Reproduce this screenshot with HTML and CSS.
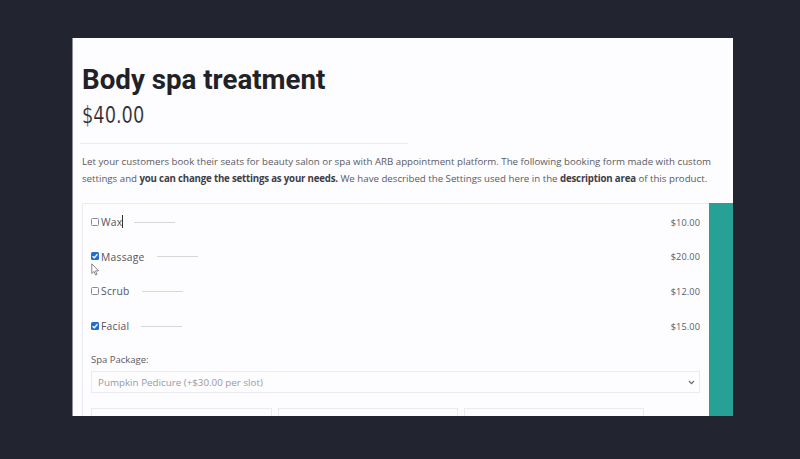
FILE: index.html
```html
<!DOCTYPE html>
<html>
<head>
<meta charset="utf-8">
<link rel="stylesheet" href="styles.css">
</head>
<body>
<div class="panel">
  <h1 class="title">Body spa treatment</h1>
  <div class="price"><span>$40.00</span></div>
  <hr class="divider">
  <p class="desc">Let your customers book their seats for beauty salon or spa with ARB appointment platform. The following booking form made with custom settings and <b>you can change the settings as your needs.</b> We have described the Settings used here in the <b>description area</b> of this product.</p>
  <div class="form">
    <div class="row">
      <label class="opt"><span class="cb"></span><span class="lbl">Wax<span class="caret"></span></span><span class="rule"></span></label>
      <span class="amt">$10.00</span>
    </div>
    <div class="row">
      <label class="opt"><span class="cb on"><svg viewBox="0 0 8 8" width="8" height="8"><path d="M1.6 4.2 L3.3 5.8 L6.4 2.3" fill="none" stroke="#fff" stroke-width="1.3"/></svg></span><span class="lbl">Massage</span><span class="rule"></span></label>
      <span class="amt">$20.00</span>
    </div>
    <div class="row">
      <label class="opt"><span class="cb"></span><span class="lbl">Scrub</span><span class="rule"></span></label>
      <span class="amt">$12.00</span>
    </div>
    <div class="row">
      <label class="opt"><span class="cb on"><svg viewBox="0 0 8 8" width="8" height="8"><path d="M1.6 4.2 L3.3 5.8 L6.4 2.3" fill="none" stroke="#fff" stroke-width="1.3"/></svg></span><span class="lbl">Facial</span><span class="rule"></span></label>
      <span class="amt">$15.00</span>
    </div>
    <div class="field-label">Spa Package:</div>
    <div class="select"><span>Pumpkin Pedicure (+$30.00 per slot)</span><svg width="7" height="5" viewBox="0 0 7 5"><path d="M1 1 L3.5 3.6 L6 1" fill="none" stroke="#666" stroke-width="1.1"/></svg></div>
    <div class="inputs">
      <div class="inp"></div>
      <div class="inp"></div>
      <div class="inp"></div>
    </div>
    <svg class="pointer" width="9" height="13" viewBox="0 0 9 13"><path d="M0.8 0.8 L0.8 10.5 L3 8.4 L4.6 12 L6 11.4 L4.5 7.9 L7.6 7.8 Z" fill="#fff" stroke="#777" stroke-width="0.9" stroke-linejoin="round"/></svg>
  </div>
  <div class="side"></div>
</div>
</body>
</html>
```
FILE: styles.css
```css
html, body {
  margin: 0;
  padding: 0;
  background: #22252f;
}
body {
  height: 459px;
  overflow: hidden;
  padding-top: 38px;
  box-sizing: border-box;
}
.panel {
  position: relative;
  margin-left: 72px;
  width: 661px;
  height: 378px;
  background: #fdfcfe;
  border-left: 1px solid #8d8d98;
  box-sizing: border-box;
  overflow: hidden;
  padding: 25px 0 0 9px;
}
.title {
  margin: 0;
  font-family: Roboto, "Liberation Sans", sans-serif;
  font-weight: 700;
  font-size: 27.7px;
  line-height: 34px;
  color: #222226;
}
.price {
  height: 30px;
  margin-top: 3px;
}
.price span {
  display: inline-block;
  font-family: "DejaVu Sans Condensed", "DejaVu Sans", sans-serif;
  font-weight: 400;
  font-size: 23px;
  line-height: 30px;
  color: #26262b;
  transform: scaleX(0.86);
  transform-origin: left center;
  -webkit-text-stroke: 0.2px #fdfcfe;
}
.divider {
  margin: 13px 0 0 -2px;
  width: 328px;
  border: 0;
  border-top: 1px solid #ecebf0;
  height: 0;
}
.desc {
  margin: 9px 0 0 0;
  width: 640px;
  font-family: "Open Sans", "Liberation Sans", sans-serif;
  font-size: 9.7px;
  line-height: 17px;
  color: #5a5a62;
}
.desc b {
  font-weight: 700;
  color: #3e3e46;
  letter-spacing: -0.2px;
}
.form {
  position: relative;
  margin-top: 16px;
  width: 640px;
  border: 1px solid #ebeaf0;
  padding: 1px 0 20px 8px;
  box-sizing: border-box;
}
.row {
  height: 34.6px;
  width: 609px;
  display: flex;
  align-items: center;
  justify-content: space-between;
}
.opt {
  display: flex;
  align-items: center;
  font-family: "Open Sans", "Liberation Sans", sans-serif;
  font-size: 10.3px;
  color: #55555d;
}
.cb {
  width: 6px;
  height: 6px;
  border: 1px solid #8a8a92;
  border-radius: 1.5px;
  background: #fff;
  margin-right: 2px;
  display: flex;
  align-items: center;
  justify-content: center;
  position: relative;
  top: -0.5px;
}
.cb.on {
  width: 8px;
  height: 8px;
  border: 0;
  background: #1f6fd0;
}
.lbl {
  position: relative;
  letter-spacing: 0.25px;
}
.caret {
  position: absolute;
  right: -1px;
  top: 0px;
  height: 13px;
  border-left: 1px solid #333;
}
.rule {
  width: 41px;
  border-top: 1px solid #d6d6dc;
  margin-left: 12px;
}
.amt {
  font-family: "Open Sans", "Liberation Sans", sans-serif;
  font-size: 9.2px;
  color: #5d5d66;
  letter-spacing: 0.1px;
}
.field-label {
  margin-top: 10px;
  font-family: "Open Sans", "Liberation Sans", sans-serif;
  font-size: 9.5px;
  line-height: 14px;
  color: #5a5a62;
}
.select {
  margin-top: 4px;
  width: 609px;
  height: 22px;
  box-sizing: border-box;
  border: 1px solid #ebeaf0;
  display: flex;
  align-items: center;
  justify-content: space-between;
  padding: 0 4px 0 6px;
  font-family: "Open Sans", "Liberation Sans", sans-serif;
  font-size: 9.8px;
  color: #9a9aa2;
}
.inputs {
  margin-top: 15px;
  display: grid;
  grid-template-columns: 181px 180px 180px;
  gap: 6px;
}
.inp {
  height: 30px;
  border: 1px solid #ebeaf0;
}
.pointer {
  position: absolute;
  left: 8px;
  top: 59px;
}
.side {
  position: absolute;
  right: 0;
  top: 165px;
  bottom: 0;
  width: 24px;
  background: #27a096;
}
```
